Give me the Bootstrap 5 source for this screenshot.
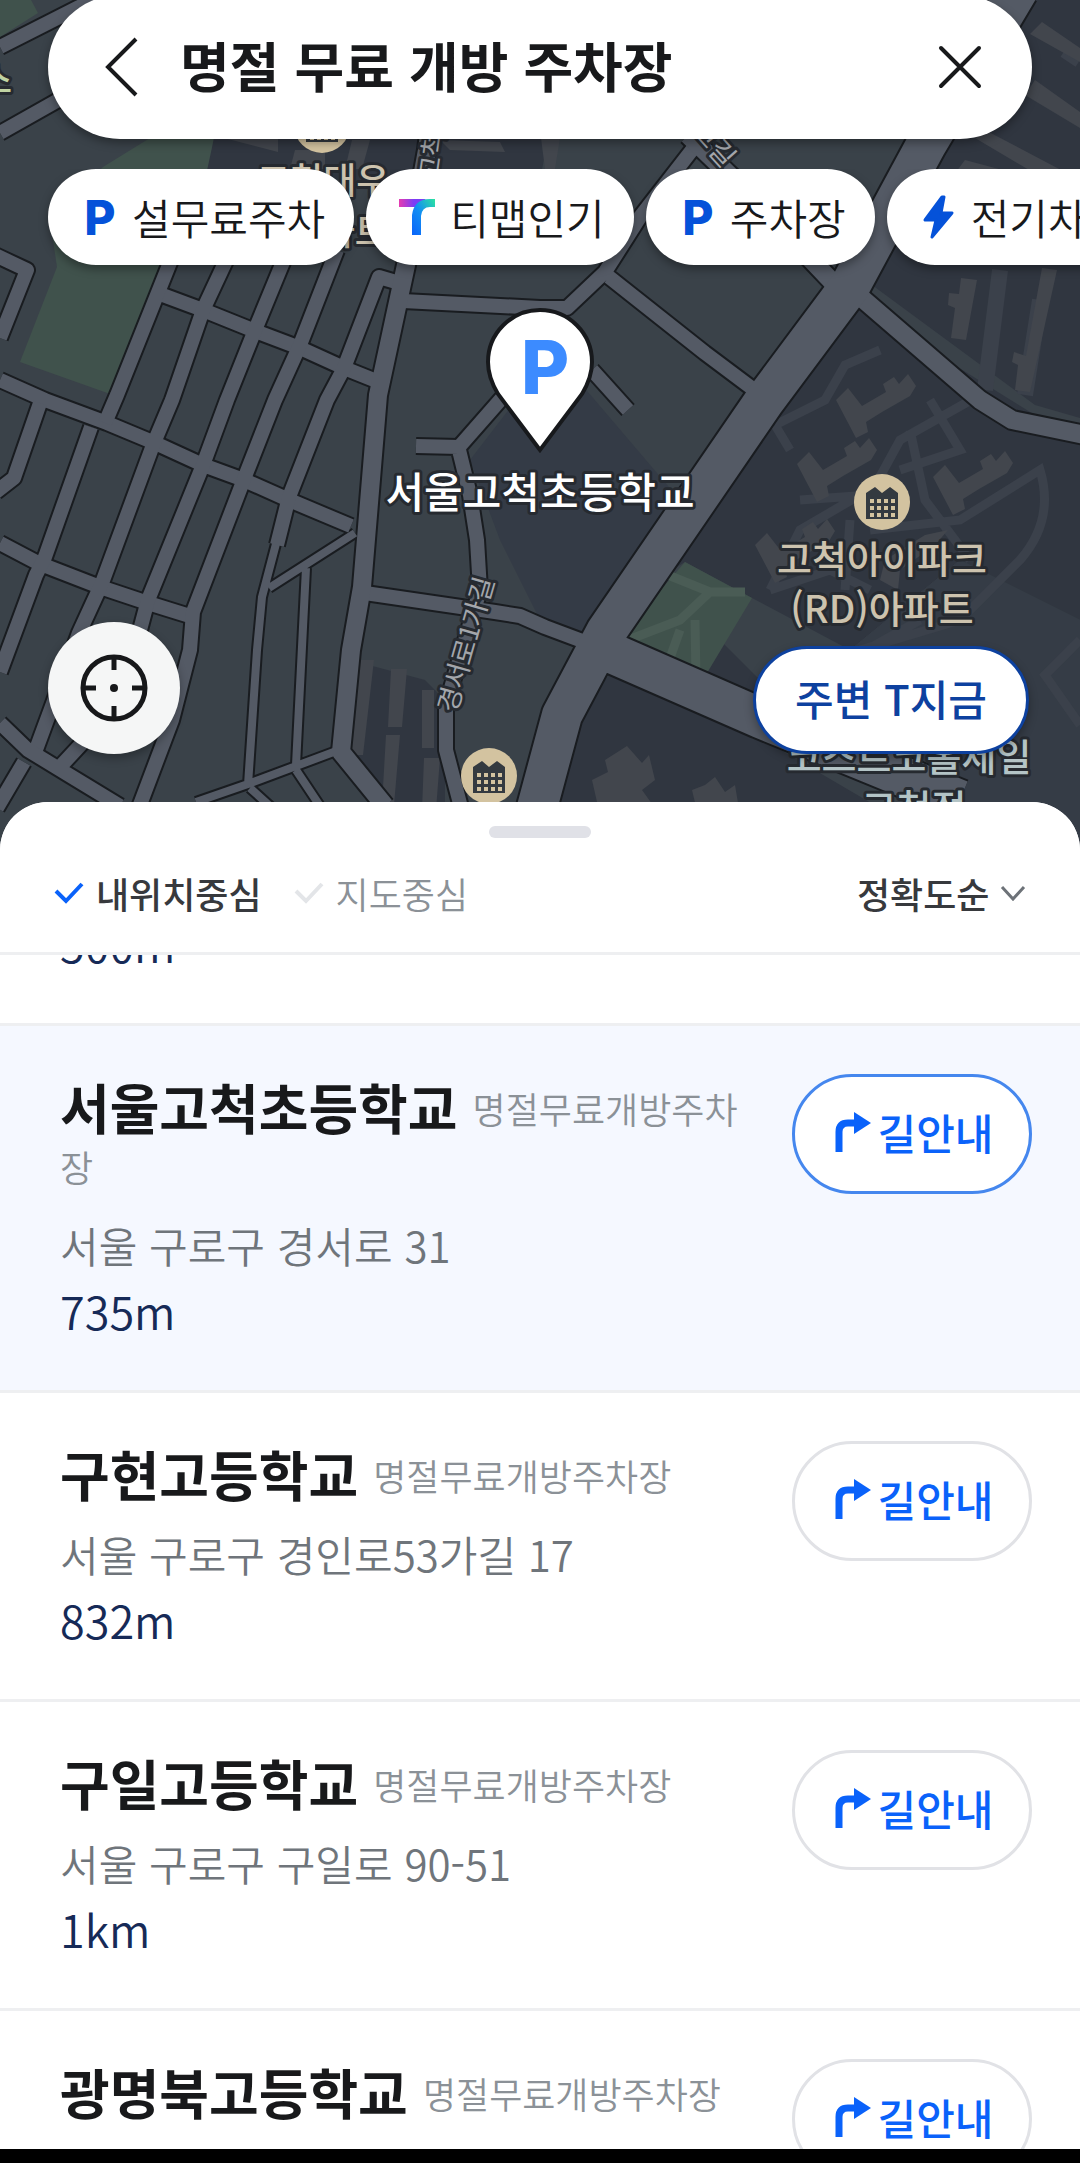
<!DOCTYPE html>
<html lang="ko">
<head>
<meta charset="utf-8">
<meta name="viewport" content="width=device-width, initial-scale=1">
<title>명절 무료 개방 주차장</title>
<link href="https://cdn.jsdelivr.net/npm/bootstrap@5.3.0/dist/css/bootstrap.min.css" rel="stylesheet">
<style>
body{font-family:"Noto Sans CJK KR",sans-serif;color:#18191b;background:#fff;}
.screen{height:100vh;overflow:hidden}
.map-area{min-height:802px;background:#3a4149}
.map-canvas{top:0;left:0;width:100%;height:860px}
.map-ui{min-height:802px;padding-bottom:48px}
.search-bar{height:144px;margin:-5px 48px 0;padding:0 42px 0 44px;border-radius:72px;box-shadow:0 4px 10px rgba(0,0,0,.35)}
.search-bar input{font-size:54px;font-weight:700;line-height:80px;color:#18191b;outline:0}
.icon-btn{width:60px;height:80px}
.chips{margin-top:30px;padding-left:48px;gap:12px}
.chip{height:96px;padding:0 29px 0 28px;gap:8px;border-radius:48px;font-size:42px;font-weight:350;line-height:60px;color:#18191b;box-shadow:0 4px 10px rgba(0,0,0,.35)}
.chip-icon{width:48px;height:48px}
.logo-p{font-family:Inter,sans-serif;font-weight:800;fill:#0552d9}
.logo-pin{fill:#3c8bff}
.controls{padding:0 51px 0 48px}
.locate{width:132px;height:132px;background:#f5f6f6;box-shadow:0 4px 10px rgba(0,0,0,.3)}
.nearby{height:108px;padding:0 39px 4px;border:3px solid #0d419f;border-radius:54px;color:#0d419f;font-size:42px;font-weight:500;line-height:60px;box-shadow:0 4px 10px rgba(0,0,0,.3)}
.sheet{border-radius:48px 48px 0 0;min-height:0}
.sheet-head{padding:24px 54px 0;border-bottom:3px solid #eeeff1}
.handle{width:102px;height:12px;border-radius:6px;background:#e0e1e7}
.filters{height:114px;padding-bottom:4px;font-size:36px;line-height:52px}
.filters label{gap:12px;color:#8b9197;font-weight:350}
.filters label svg{stroke:#e3e5e8}
.filters .btn-check:checked + label{color:#37393d;font-weight:500}
.filters .btn-check:checked + label svg{stroke:#0a62fa}
.sort-pick{appearance:none;font-weight:500;color:#37393d}
.place{padding:0 48px 46px 60px;border-bottom:3px solid #eeeff1;gap:40px}
.place-full{padding-top:48px}
.place-on{background:#f5f8ff}
.place-cut{margin-top:-44px}
.place-name{font-size:54px;font-weight:700;line-height:58px;word-break:break-all;padding-top:4px;margin-bottom:18px}
.place-kind{font-size:36px;font-weight:350;line-height:1;color:#8b9197;vertical-align:6px}
.place-addr,.place-dist{font-size:42px;font-weight:350;line-height:66px}
.place-addr{color:#6f757b}
.place-dist{font-size:45px;color:#162a57}
.route{width:240px;height:120px;border:3px solid #e1e2e6;border-radius:60px;color:#0a62fa;font-size:42px;font-weight:500;line-height:60px;gap:7px;padding:0 0 4px 4px}
.place-on .route{border-color:#4587ee}
.sys-bar{height:14px;background:#000}
.map-text{font-family:"Noto Sans CJK KR",sans-serif;paint-order:stroke;stroke:#262a30;stroke-width:6px;stroke-linejoin:round;font-weight:500}
.road-label{fill:#a3a6ab;font-size:27px;font-weight:400}
</style>
<script src="https://cdn.jsdelivr.net/npm/bootstrap@5.3.0/dist/js/bootstrap.bundle.min.js"></script>
</head>
<body>
<main class="screen d-flex flex-column">
<section class="map-area position-relative flex-shrink-0">
<svg class="map-canvas position-absolute" viewBox="0 0 1080 860" preserveAspectRatio="xMidYMin slice" aria-hidden="true">
<defs>
<g id="thin">
<path d="M0 47 79 7 120-12M0 133 62 98 110 80M-5 255 27 270 0 338"/>
<path d="M0 380 45 400 107 423 155 443 203 465 244 480 289 500 351 526"/>
<path d="M160 294 203 310 255 331 300 348 344 368 374 380"/>
<path d="M0 543 38 563 100 587 148 603 193 617"/>
<path d="M175 250 117 395 105 423M40 403 14 478-4 492M91 427 45 557 36 575 0 672"/>
<path d="M231 250 203 310 172 400 153 445 102 583 79 633 34 755"/>
<path d="M288 250 255 330 227 400 203 465 148 600 140 630"/>
<path d="M337 250 300 345 275 400 244 479 193 612 190 650 172 720 138 810"/>
<path d="M396 282 379 277 344 368 327 400 289 497 277 545"/>
<path d="M0 723 28 750 69 775 120 806M59 768 85 740M24 762-3 808"/>
<path d="M403 301 540 308 567 308 605 272 640 217 692 150M609 277 705 353 757 392"/>
<path d="M416 446 459 447 530 366M592 370 628 410M459 450 470 495 477 540 480 590 446 705 446 750 463 815"/>
<path d="M365 593 495 612 520 616 545 627 585 642"/>
</g>
<g id="slim">
<path d="M355 533 269 588M277 540 262 597 257 650 248 785M306 568 296 765M196 802 248 784 339 750M296 770 320 806M250 788 272 808"/>
</g>
<g id="mid">
<path d="M446 0 427 150 406 265 378 395 362 587 351 650 341 752 385 806"/>
<path d="M688 135 745 190 840 290M857 294 980 400 1012 420 1085 435"/>
</g>
<g id="wide">
<path d="M1018-10 926 145 850 286 765 400 606 632 562 715 535 815M600 648 760 718 960 800"/>
</g>
<g id="tower"><path d="M0 22 12 10 26 28 50 14 47 6 58-1 63 6 72-4 80 8 74 18 46 34 30 44 32 54 20 60z"/></g>
<g id="poi"><circle r="28" fill="#d3c3a0"/><path d="M-16 17V-9l9-6 7 6 8-6 8 6v26z" fill="#343a40"/><path d="M-12-3h4v4h-4zm7 0h4v4h-4zm7 0h4v4h-4zm7 0h4v4h-4zM-12 4h4v4h-4zm7 0h4v4h-4zm7 0h4v4h-4zm7 0h4v4h-4zM-12 11h4v4h-4zm7 0h4v4h-4zm7 0h4v4h-4zm7 0h4v4h-4z" fill="#d3c3a0"/></g>
</defs>
<rect width="1080" height="860" fill="#3a4249"/>
<path d="M0 0H31L38 13 0 37zM150 138H214L208 180 165 260 113 395 20 362 57 267 50 220 103 167z" fill="#40524c"/>
<path d="M214 138H548L540 180H205zM1037-10H1080V418L1035 405 872 285 880 255 946 150zM850 300 1080 443V620L960 560 850 650 752 598 685 562 640 590zM350 660 425 680 445 700V820H395L345 750zM609 675 767 742 900 820H552L578 715zM640 620 704 678 790 710 720 640z" fill="#303640"/>
<path d="M470 460 520 395 565 365 680 500 690 520 585 642 540 620 500 540z" fill="#343b46"/>
<path d="M850 650 960 560 1080 620V860H960L870 770z" fill="#353c46"/>
<g fill="none" stroke="#3b414b" stroke-width="12">
<path d="M880 350 845 365 825 400 775 425M775 425 790 450M800 500 870 495 900 440 980 395M770 590 800 530 860 495M770 590 830 570 870 590M910 430 925 500 970 560M870 530 960 520 1040 470Q1055 520 1020 560L960 620 860 650M930 400 960 450 900 470M850 520 845 590M920 620 840 665M1080 640 1045 675 1080 725" stroke-width="9"/>
<path d="M1040 300 1025 395M1065 50 1080 60M1000 270 985 390" stroke-width="16"/>
</g>
<g fill="#42464d">
<path d="M1042 22 1080 48V62L1030 34zM1035 80 1080 112V128L1025 95zM975 138 1080 200V180L985 130zM965 160 1010 172V180H950zM961 278 977 280 966 340 951 338 955 308 948 305 949 293 959 294zM1042 268 1057 270 1030 392 1015 390 1018 365 1012 362 1014 352 1026 356zM224 138H278V152zM295 150H325V169H290zM352 140H370L362 169H345zM440 140 500 142 505 152 450 150zM541 138H560L555 169H545z"/>
<path d="M360 660H374L363 755H349zM391 669H407L402 727H388zM386 735H400L394 805H382zM422 690H434V748H422zM424 758H440L436 810H422zM627 746 642 763 649 755 655 780 642 790 660 815H600L592 780 608 772 605 760zM715 777 725 792 735 785 740 815H698L692 790 705 785z"/>
<use href="#tower" x="836" y="378"/><use href="#tower" x="797" y="442"/><use href="#tower" x="933" y="455"/><use href="#tower" x="755" y="523"/><path d="M925 535 948 530 935 545 900 570 898 590 880 580 885 560z"/>
</g>
<path d="M685 562 752 598 704 678 624 648 626 630z" fill="#40524c"/>
<g fill="none" stroke="#4a5c55" stroke-width="9"><path d="M668 575 710 592 745 592M712 590 680 620 628 640M695 620 696 680M680 630 665 672"/></g>
<g fill="none" stroke="#191c20" stroke-linejoin="round">
<use href="#slim" stroke-width="12"/><use href="#thin" stroke-width="18"/><use href="#mid" stroke-width="22"/><use href="#wide" stroke-width="44"/>
</g>
<g fill="none" stroke="#545a65" stroke-linejoin="round">
<use href="#slim" stroke-width="8"/><use href="#thin" stroke-width="14"/><use href="#mid" stroke-width="18"/><use href="#wide" stroke-width="40"/>
</g>
<use href="#poi" x="322" y="125"/><use href="#poi" x="882" y="502"/><use href="#poi" x="489" y="776"/>
<g class="map-text" font-size="38" fill="#cdc3ae">
<text x="257" y="194" font-size="36">고척대우</text>
<text x="388" y="245" font-size="36" text-anchor="end">아파트</text>
<text x="882" y="573" text-anchor="middle">고척아이파크</text>
<text x="882" y="623" text-anchor="middle">(RD)아파트</text>
</g>
<text class="map-text" x="12" y="93" font-size="36" fill="#c0d3a2" text-anchor="end">스</text>
<g class="map-text" font-size="38" fill="#b4c4c6" text-anchor="middle"><text x="909" y="771">코스트코홀세일</text><text x="914" y="822">고척점</text></g>
<text class="map-text road-label" transform="translate(456 714)rotate(-74)">경서로1가길</text>
<text class="map-text road-label" transform="translate(438 182)rotate(-82)">고척</text>
<text class="map-text road-label" transform="translate(690 132)rotate(48)">고길</text>
<path d="M540 450 498 394C492 384 488 375 488 362a52 52 0 0 1 104 0C592 375 588 384 582 394z" fill="#fff" stroke="#17191c" stroke-width="4"/>
<text x="545" y="394" font-size="74" text-anchor="middle" class="logo-p logo-pin">P</text>
<text class="map-text" x="540" y="508" font-size="42" fill="#fff" text-anchor="middle">서울고척초등학교</text>
</svg>

<div class="map-ui position-relative d-flex flex-column">
<form class="search-bar d-flex align-items-center bg-white" role="search" onsubmit="return false">
<button type="button" class="icon-btn btn p-0 border-0 flex-shrink-0" aria-label="뒤로"><svg width="60" height="64" viewBox="0 0 60 64" fill="none" stroke="#18191b" stroke-width="4"><path d="M44 4 16 32 44 60"/></svg></button>
<input type="text" class="form-control border-0 shadow-none p-0 pb-1 ms-4 ps-1 bg-transparent" value="명절 무료 개방 주차장" aria-label="검색어">
<button type="button" class="icon-btn btn p-0 border-0 flex-shrink-0" aria-label="지우기"><svg width="44" height="44" viewBox="0 0 44 44" fill="none" stroke="#18191b" stroke-width="4" stroke-linecap="round"><path d="M3 3 41 41M41 3 3 41"/></svg></button>
</form>
<div class="chips d-flex flex-nowrap overflow-hidden pb-4">
<button type="button" class="chip btn bg-white border-0 d-flex align-items-center flex-shrink-0"><svg class="chip-icon" viewBox="0 0 48 48"><text class="logo-p" x="24" y="42" font-size="48" text-anchor="middle">P</text></svg>설무료주차</button>
<button type="button" class="chip btn bg-white border-0 d-flex align-items-center flex-shrink-0"><svg class="chip-icon" viewBox="0 0 48 48"><defs><linearGradient id="tBar"><stop offset="0" stop-color="#e63bb0"/><stop offset=".55" stop-color="#7c3df5"/></linearGradient><linearGradient id="tStem" x1="1" y1="0" x2="0" y2="1"><stop offset="0" stop-color="#2ce3a0"/><stop offset=".5" stop-color="#1290f2"/><stop offset="1" stop-color="#0a62fa"/></linearGradient></defs><path d="M5 6H32L22 14H5z" fill="url(#tBar)"/><path d="M41 6V14H36Q28 14 27 23V42H18V22Q20 6 36 6z" fill="url(#tStem)"/></svg>티맵인기</button>
<button type="button" class="chip btn bg-white border-0 d-flex align-items-center flex-shrink-0"><svg class="chip-icon" viewBox="0 0 48 48"><text class="logo-p" x="24" y="42" font-size="48" text-anchor="middle">P</text></svg>주차장</button>
<button type="button" class="chip btn bg-white border-0 d-flex align-items-center flex-shrink-0"><svg class="chip-icon" viewBox="0 0 48 48"><path d="M27 4 10 27H21L17 44 37 20H26L29 4z" fill="#0552d9" stroke="#0552d9" stroke-width="3" stroke-linejoin="round"/></svg>전기차충전</button>
</div>
<div class="controls d-flex justify-content-between align-items-end mt-auto">
<button type="button" class="locate btn rounded-circle border-0 p-0 d-flex align-items-center justify-content-center" aria-label="내 위치"><svg width="70" height="70" viewBox="0 0 70 70" fill="none" stroke="#17181a" stroke-width="5"><circle cx="35" cy="35" r="31"/><path d="M35 2V17M35 53V68M2 35H17M53 35H68"/><circle cx="35" cy="35" r="4" fill="#17181a" stroke="none"/></svg></button>
<button type="button" class="nearby btn bg-white">주변 T지금</button>
</div>
</div>
</section>

<section class="sheet bg-white position-relative d-flex flex-column flex-grow-1 overflow-hidden">
<div class="sheet-head bg-white position-relative z-1">
<div class="handle mx-auto"></div>
<div class="filters d-flex align-items-center">
<input type="radio" class="btn-check" name="center" id="byMe" checked>
<label for="byMe" class="d-flex align-items-center"><svg width="30" height="24" viewBox="0 0 30 24" fill="none" stroke-width="4"><path d="M2 10 12 20 28 3"/></svg>내위치중심</label>
<input type="radio" class="btn-check" name="center" id="byMap">
<label for="byMap" class="d-flex align-items-center ms-4 ps-2"><svg width="30" height="24" viewBox="0 0 30 24" fill="none" stroke-width="4"><path d="M2 10 12 20 28 3"/></svg>지도중심</label>
<div class="ms-auto d-flex align-items-center gap-2">
<select class="sort-pick border-0 bg-transparent p-0" aria-label="정렬"><option>정확도순</option></select>
<svg width="28" height="20" viewBox="0 0 28 20" fill="none" stroke="#6d7278" stroke-width="3"><path d="M4 4 15 16 26 4"/></svg>
</div>
</div>
</div>
<svg class="d-none"><symbol id="turn" viewBox="0 0 36 40"><path d="M4 40V20Q4 11 13 11H20" fill="none" stroke="#0a62fa" stroke-width="7"/><path d="M19 0 36 11 19 22z" fill="#0a62fa"/></symbol></svg>
<ul class="list-unstyled mb-0 flex-grow-1 overflow-hidden">
<li class="place place-cut"><div class="place-dist">500m</div></li>
<li class="place place-full place-on d-flex align-items-start">
<div class="flex-grow-1"><h2 class="place-name">서울고척초등학교 <span class="place-kind">명절무료개방주차장</span></h2><div class="place-addr">서울 구로구 경서로 31</div><div class="place-dist">735m</div></div>
<button type="button" class="route btn bg-white d-flex align-items-center justify-content-center flex-shrink-0"><svg width="36" height="40"><use href="#turn"/></svg>길안내</button></li>
<li class="place place-full d-flex align-items-start">
<div class="flex-grow-1"><h2 class="place-name">구현고등학교 <span class="place-kind">명절무료개방주차장</span></h2><div class="place-addr">서울 구로구 경인로53가길 17</div><div class="place-dist">832m</div></div>
<button type="button" class="route btn bg-white d-flex align-items-center justify-content-center flex-shrink-0"><svg width="36" height="40"><use href="#turn"/></svg>길안내</button></li>
<li class="place place-full d-flex align-items-start">
<div class="flex-grow-1"><h2 class="place-name">구일고등학교 <span class="place-kind">명절무료개방주차장</span></h2><div class="place-addr">서울 구로구 구일로 90-51</div><div class="place-dist">1km</div></div>
<button type="button" class="route btn bg-white d-flex align-items-center justify-content-center flex-shrink-0"><svg width="36" height="40"><use href="#turn"/></svg>길안내</button></li>
<li class="place place-full d-flex align-items-start">
<div class="flex-grow-1"><h2 class="place-name">광명북고등학교 <span class="place-kind">명절무료개방주차장</span></h2></div>
<button type="button" class="route btn bg-white d-flex align-items-center justify-content-center flex-shrink-0"><svg width="36" height="40"><use href="#turn"/></svg>길안내</button></li>
</ul>
</section>
<div class="sys-bar flex-shrink-0"></div>
</main>
</body>
</html>
